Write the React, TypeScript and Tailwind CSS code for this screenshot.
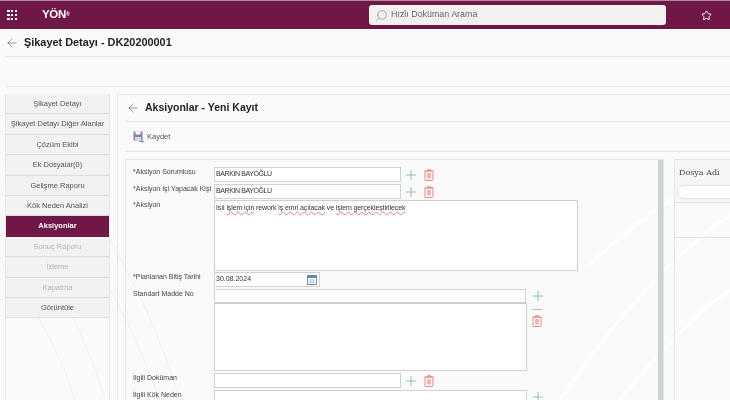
import { ArrowLeft, Plus, Search, Star } from "lucide-react";

const tabs = [
  { label: "Şikayet Detayı" },
  { label: "Şikayet Detayı Diğer Alanlar" },
  { label: "Çözüm Ekibi" },
  { label: "Ek Dosyalar(0)" },
  { label: "Gelişme Raporu" },
  { label: "Kök Neden Analizi" },
  { label: "Aksiyonlar", active: true },
  { label: "Sonuç Raporu", disabled: true },
  { label: "İzleme", disabled: true },
  { label: "Kapatma", disabled: true },
  { label: "Görüntüle" },
];

function TrashIcon() {
  return (
    <svg width="10" height="12" viewBox="0 0 10 12" fill="none" className="shrink-0">
      <path d="M0.5 2h9M3.5 2V0.7h3V2" stroke="#e58a8a" strokeWidth="1" />
      <rect x="1" y="2" width="8" height="9.5" rx="1" stroke="#e58a8a" strokeWidth="1" />
      <rect x="3" y="4" width="4" height="5.5" fill="#f3b4b4" />
    </svg>
  );
}

function GreenPlus() {
  return <Plus size={16} strokeWidth={1} className="shrink-0 text-[#5fb37a]" />;
}

function Actions() {
  return (
    <div className="flex items-center gap-[5px] ml-[2px]">
      <GreenPlus />
      <TrashIcon />
    </div>
  );
}

function Row({ label, children, className }: { label: string; children: React.ReactNode; className: string }) {
  return (
    <div className={`flex ${className}`}>
      <div className="w-[81px] shrink-0 leading-[9px] whitespace-nowrap">{label}</div>
      {children}
    </div>
  );
}

const inputCls =
  "flex items-center h-full bg-white border border-[#d2d2d2] px-px text-[#333] text-[7px]";

const misspelt = "underline decoration-wavy decoration-[#e88080] decoration-[0.5px]";

export default function App() {
  return (
    <div className="relative w-[730px] h-[400px] overflow-hidden bg-[#fafafa] text-[#444] blur-[0.5px] font-['Liberation_Sans',sans-serif]">
      <svg width="730" height="400" fill="none" className="absolute inset-0 pointer-events-none">
        <path d="M560 400C620 310 680 250 730 215M620 400C660 350 700 310 730 290M590 265C630 225 680 190 730 170" stroke="#ffffff" strokeWidth="3" />
        <path d="M0 130C60 200 120 290 160 400M0 190C40 250 85 330 105 400M0 260C30 300 60 350 75 400M20 120C90 190 150 300 180 400" stroke="#f0f0f0" strokeWidth="1" />
      </svg>

      <header className="relative flex items-center h-[29px] bg-[#6f1746] border-t border-[#b08aa0]">
        <div className="grid grid-cols-3 gap-[1.5px] ml-[7px] w-[10px]">
          {Array.from({ length: 9 }).map((_, i) => (
            <span key={i} className="w-[2.5px] h-[2.5px] bg-white" />
          ))}
        </div>
        <span className="ml-[25px] w-[27px] text-[11.5px] font-bold text-white tracking-[-0.3px]">
          YÖN<sup className="text-[5px]">®</sup>
        </span>
        <div className="flex items-center ml-[300px] w-[297px] h-[20px] rounded-[3px] bg-[#f3f1f0] pl-[6px] text-[8.9px] text-[#666]">
          <Search size={13} strokeWidth={1} className="-scale-x-100 text-[#777]" />
          <span className="ml-[3px]">Hızlı Doküman Arama</span>
        </div>
        <Star size={11} strokeWidth={2} className="ml-[35px] text-white" />
      </header>

      <div className="relative flex items-center h-[28px] ml-[5px] border-b border-[#e6e6e6]">
        <ArrowLeft size={14} strokeWidth={1} className="text-[#555]" />
        <h1 className="ml-[5px] text-[10.9px] font-bold text-[#222]">Şikayet Detayı - DK20200001</h1>
      </div>
      <div className="relative h-[30px] ml-[5px] border-b border-[#e6e6e6]" />

      <div className="relative flex mt-[7px] pl-[5px] gap-[7px] h-[400px] text-[7.5px]">
        <nav className="w-[105px] shrink-0 border-x border-[#e8e8e8]">
          {tabs.map((tab) => (
            <div
              key={tab.label}
              className={`flex items-center justify-center h-[20.4px] whitespace-nowrap border-b ${
                tab.active
                  ? "bg-[#6f1746] text-white font-bold border-[#6f1746]"
                  : tab.disabled
                    ? "bg-[#f2f2f2] text-[#b5b5b5] border-[#dcdcdc]"
                    : "bg-[#f2f2f2] text-[#555] border-[#dcdcdc]"
              }`}
            >
              {tab.label}
            </div>
          ))}
        </nav>

        <main className="flex-1 min-w-0 border-l border-t border-[#e8e8e8] pl-[7px]">
          <div className="flex items-center h-[27px] border-b border-[#e4e4e4]">
            <ArrowLeft size={14} strokeWidth={1} className="ml-px text-[#555]" />
            <h2 className="ml-[5px] text-[10.5px] font-bold text-[#222]">Aksiyonlar - Yeni Kayıt</h2>
          </div>
          <div className="flex items-center h-[30px] pl-[8px] border-b border-[#e4e4e4] text-[#555]">
            <svg width="11" height="12" viewBox="0 0 11 12" fill="none">
              <rect x="0.5" y="0.5" width="9" height="9" fill="#8d7fb0" />
              <rect x="2.5" y="0.5" width="5" height="3" fill="#ffffff" />
              <rect x="2" y="6" width="6" height="3.5" fill="#dcd8e8" />
              <path d="M6 10.5h4.5M9 9l1.5 1.5L9 12" stroke="#4f8fc0" strokeWidth="0.8" />
            </svg>
            <span className="ml-[3px]">Kaydet</span>
          </div>

          <div className="flex mt-[7px] gap-[10px]">
            <section className="relative w-[539px] shrink-0 h-[300px] border border-[#e6e6e6] pl-[7px] pt-[7px] text-[7px]">
              <div className="absolute right-0 top-0 bottom-0 w-[5px] bg-[#ccd3d6]" />
              <Row label="*Aksiyon Sorumlusu" className="h-[15px] mb-[2px]">
                <div className={`${inputCls} w-[187px]`}>
                  <span className="tracking-[-0.4px]">BARKIN BAYOĞLU</span>
                </div>
                <Actions />
              </Row>
              <Row label="*Aksiyon İşi Yapacak Kişi" className="h-[15px] mb-px">
                <div className={`${inputCls} w-[187px]`}>
                  <span className="tracking-[-0.4px]">BARKIN BAYOĞLU</span>
                </div>
                <Actions />
              </Row>
              <Row label="*Aksiyon" className="h-[71px] mb-px">
                <div className="w-[364px] bg-white border border-[#cfcfcf] px-px py-[2px] text-[7px] leading-[10px] tracking-[-0.1px] text-[#333]">
                  Isıl <span className={misspelt}>işlem için</span> rework{" "}
                  <span className={misspelt}>iş emri açılacak</span> ve{" "}
                  <span className={misspelt}>işlem gerçekleştirilecek</span>
                </div>
              </Row>
              <Row label="*Planlanan Bitiş Tarihi" className="h-[15px] mb-[2px]">
                <div className={`${inputCls} w-[106px] justify-between pr-[2px]`}>
                  30.08.2024
                  <svg width="10" height="10" viewBox="0 0 10 10" fill="none">
                    <rect x="0.5" y="0.5" width="9" height="9" fill="#ffffff" stroke="#6f8fb5" />
                    <rect x="0.5" y="0.5" width="9" height="2.5" fill="#5f86b8" />
                    <path d="M2 5h6M2 7h6M3.5 4v4.5M6.5 4v4.5" stroke="#a9b9cc" strokeWidth="0.7" />
                  </svg>
                </div>
              </Row>
              <Row label="Standart Madde No" className="h-[82px] mb-[2px]">
                <div className="flex flex-col w-[313px]">
                  <div className={`${inputCls} !h-[14px] w-[312px]`} />
                  <div className="flex-1 bg-white border border-[#cfcfcf]" />
                </div>
                <div className="flex flex-col items-center ml-[3px] w-[16px] -mt-px">
                  <GreenPlus />
                  <div className="mt-[5px] mr-[2px] w-[10px] h-px bg-[#eba6a6]" />
                  <div className="mt-[5px] mr-[2px]"><TrashIcon /></div>
                </div>
              </Row>
              <Row label="İlgili Doküman" className="h-[15px] mb-[2px]">
                <div className={`${inputCls} w-[187px]`} />
                <Actions />
              </Row>
              <Row label="İlgili Kök Neden" className="h-[40px]">
                <div className={`${inputCls} w-[313px]`} />
                <div className="ml-[3px] -mt-px h-fit"><GreenPlus /></div>
              </Row>
            </section>

            <aside className="w-[80px] shrink-0 h-[300px] border border-[#e6e6e6]">
              <div className="flex items-center h-[25px] pl-[4px] text-[8px] font-['DejaVu_Serif',serif] text-[#444] bg-[#f6f6f6]">
                Dosya Adı
              </div>
              <div className="h-[18px] px-[2px] border-b border-[#e4e4e4] bg-[#f6f6f6]">
                <div className="h-[14px] bg-white border border-[#e2e2e2] rounded-full" />
              </div>
              <div className="h-[35px] border-b border-[#e4e4e4]" />
            </aside>
          </div>
        </main>
      </div>
    </div>
  );
}
